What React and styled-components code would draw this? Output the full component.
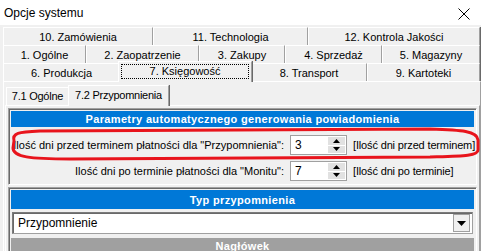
import React from "react";
import styled, { createGlobalStyle } from "styled-components";

const GlobalStyle = createGlobalStyle`
  html, body {
    margin: 0;
    padding: 0;
    background: #f0f0f0;
    overflow: hidden;
  }
  body {
    font-family: "Liberation Sans", Arial, sans-serif;
    font-size: 11px;
    color: #000;
  }
`;

const mainTabs = [
  [
    { label: "10. Zamówienia", w: 150 },
    { label: "11. Technologia", w: 155 },
    { label: "12. Kontrola Jakości", w: 172 },
  ],
  [
    { label: "1. Ogólne", w: 83 },
    { label: "2. Zaopatrzenie", w: 113 },
    { label: "3. Zakupy", w: 86 },
    { label: "4. Sprzedaż", w: 97 },
    { label: "5. Magazyny", w: 98 },
  ],
  [
    { label: "6. Produkcja", w: 117 },
    { label: "7. Księgowość", w: 131, active: true },
    { label: "8. Transport", w: 116 },
    { label: "9. Kartoteki", w: 113 },
  ],
];

const App = () => {
  return (
    <>
      <GlobalStyle />
      <Window>
        <TitleBar>
          <Title>Opcje systemu</Title>
          <CloseButton>
            <svg width="12" height="12" viewBox="0 0 12 12">
              <path d="M0.5 0.5 L11.5 11.5 M11.5 0.5 L0.5 11.5" stroke="#000" strokeWidth="1" />
            </svg>
          </CloseButton>
        </TitleBar>
        <Client>
          <TabRows>
            {mainTabs.map((row, i) => (
              <TabRow key={i}>
                {row.map((t) => (
                  <Tab key={t.label} $w={t.w} $active={t.active}>
                    {t.active ? <Focus>{t.label}</Focus> : t.label}
                  </Tab>
                ))}
              </TabRow>
            ))}
          </TabRows>
          <TabPanel>
            <SubTabRow>
              <SubTab $w={63}>7.1 Ogólne</SubTab>
              <SubTab $w={101} $active>7.2 Przypomnienia</SubTab>
            </SubTabRow>
            <SubPanel>
              <Section>
                <Header>Parametry automatycznego generowania powiadomienia</Header>
                <FieldGrid>
                  <FieldLabel>Ilość dni przed terminem płatności dla "Przypomnienia":</FieldLabel>
                  <Spin value="3" />
                  <Suffix>[Ilość dni przed terminem]</Suffix>
                  <FieldLabel>Ilość dni po terminie płatności dla "Monitu":</FieldLabel>
                  <Spin value="7" />
                  <Suffix>[Ilość dni po terminie]</Suffix>
                </FieldGrid>
              </Section>
              <Section>
                <Header $tall>Typ przypomnienia</Header>
                <ComboWrap>
                  <Combo>
                    <span>Przypomnienie</span>
                    <ComboButton>
                      <svg width="9" height="5" viewBox="0 0 9 5">
                        <path d="M0 0 H9 L4.5 5 Z" fill="#000" />
                      </svg>
                    </ComboButton>
                  </Combo>
                </ComboWrap>
                <Header $gray>Nagłówek</Header>
              </Section>
            </SubPanel>
          </TabPanel>
        </Client>
        <RedMark width="481" height="251" viewBox="0 0 481 251">
          <path
            d="M14 141 C12 133 18 132 40 131 L430 129 C462 130 477 131 478 140 L478 150 C478 156 462 156 430 157 L70 159 C30 159 13 157 13 148 Z"
            fill="none"
            stroke="#e8141c"
            strokeWidth="3"
          />
        </RedMark>
      </Window>
    </>
  );
};

const Spin = ({ value }) => (
  <SpinBox>
    <SpinValue>{value}</SpinValue>
    <SpinButtons>
      <SpinArrow>
        <svg width="7" height="4" viewBox="0 0 7 4">
          <path d="M3.5 0 L7 4 H0 Z" fill="#000" />
        </svg>
      </SpinArrow>
      <SpinArrow>
        <svg width="7" height="4" viewBox="0 0 7 4">
          <path d="M0 0 H7 L3.5 4 Z" fill="#000" />
        </svg>
      </SpinArrow>
    </SpinButtons>
  </SpinBox>
);

const Window = styled.div`
  position: relative;
  width: 481px;
  height: 251px;
  overflow: hidden;
`;

const TitleBar = styled.div`
  height: 25px;
  background: #fff;
  display: flex;
  align-items: center;
  justify-content: space-between;
  padding: 0 11px 0 4px;
`;

const Title = styled.div`
  font-size: 12px;
  margin-top: 1px;
`;

const CloseButton = styled.div`
  display: flex;
  margin-top: 2px;
`;

const Client = styled.div`
  padding: 2px 0 0 3px;
`;

const TabRows = styled.div`
  display: flex;
  flex-direction: column;
`;

const TabRow = styled.div`
  display: flex;
  height: 18px;
`;

const Tab = styled.div`
  position: relative;
  box-sizing: border-box;
  width: ${(p) => p.$w}px;
  flex: none;
  display: flex;
  align-items: center;
  justify-content: center;
  background: #f0f0f0;
  border-top: 1px solid #fff;
  border-left: 1px solid #fff;
  border-right: 1px solid #a0a0a0;
  box-shadow: 1px 0 0 #696969;
  padding-top: 1px;
  z-index: ${(p) => (p.$active ? 2 : 0)};
  ${(p) =>
    p.$active &&
    `
    height: 21px;
    margin-top: -2px;
    margin-left: -2px;
    width: ${p.$w + 3}px;
    padding: 2px 2px 3px;
    margin-right: -1px;
  `}
`;

const Focus = styled.div`
  flex: 1;
  align-self: stretch;
  display: flex;
  justify-content: center;
  align-items: center;
  border: 1px dotted #000;
  padding-bottom: 2px;
`;

const TabPanel = styled.div`
  box-sizing: border-box;
  width: 478px;
  height: 200px;
  border-top: 1px solid #fff;
  border-left: 1px solid #fff;
  border-right: 1px solid #a0a0a0;
  padding: 4px 0 0 1px;
`;

const SubTabRow = styled.div`
  display: flex;
  align-items: flex-end;
  height: 19px;
  padding-left: 1px;
`;

const SubTab = styled.div`
  box-sizing: border-box;
  width: ${(p) => p.$w}px;
  height: ${(p) => (p.$active ? 21 : 18)}px;
  margin-bottom: ${(p) => (p.$active ? -1 : 0)}px;
  padding: 0 0 ${(p) => (p.$active ? 3 : 1)}px;
  display: flex;
  align-items: center;
  justify-content: center;
  background: #f0f0f0;
  border-top: 1px solid #fff;
  border-left: 1px solid #fff;
  border-right: 1px solid #a0a0a0;
  box-shadow: 1px 0 0 #696969;
  font-size: 11px;
  letter-spacing: -0.25px;
  white-space: nowrap;
  position: relative;
  z-index: ${(p) => (p.$active ? 2 : 0)};
  ${(p) => p.$active && `margin-left: -1px;`}
`;

const SubPanel = styled.div`
  box-sizing: border-box;
  border-top: 1px solid #fff;
  border-left: 1px solid #fff;
  border-right: 1px solid #a0a0a0;
  padding: 2px 2px 0 2px;
  height: 160px;
  display: flex;
  flex-direction: column;
  gap: 2px;
`;

const Section = styled.div`
  border: 1px solid #a0a0a0;
  border-right-color: #fff;
  border-bottom-color: #fff;
  box-shadow: inset 1px 1px 0 #696969;
  padding: 2px 2px 0 2px;
`;

const Header = styled.div`
  height: ${(p) => (p.$tall ? 19 : 16)}px;
  background: ${(p) => (p.$gray ? "#a0a0a0" : "#0078d7")};
  color: #fff;
  font-weight: bold;
  font-size: 11px;
  letter-spacing: 0.35px;
  display: flex;
  align-items: center;
  justify-content: center;
`;

const FieldGrid = styled.div`
  display: grid;
  grid-template-columns: 273px 57px auto;
  column-gap: 6px;
  row-gap: 6px;
  align-items: center;
  padding: 8px 0 3px;
`;

const FieldLabel = styled.div`
  text-align: right;
  white-space: nowrap;
  font-size: 11px;
`;

const Suffix = styled.div`
  white-space: nowrap;
  font-size: 11px;
  letter-spacing: -0.15px;
`;

const SpinBox = styled.div`
  box-sizing: border-box;
  height: 20px;
  display: flex;
  background: #fff;
  border: 1px solid #a0a0a0;
  padding: 1px;
`;

const SpinValue = styled.div`
  flex: 1;
  display: flex;
  align-items: center;
  padding-left: 3px;
  font-size: 12px;
`;

const SpinButtons = styled.div`
  width: 17px;
  display: flex;
  flex-direction: column;
  gap: 1px;
`;

const SpinArrow = styled.div`
  flex: 1;
  background: #e1e1e1;
  display: flex;
  align-items: center;
  justify-content: center;
`;

const ComboWrap = styled.div`
  padding: 3px 1px 4px;
`;

const Combo = styled.div`
  box-sizing: border-box;
  height: 22px;
  display: flex;
  align-items: center;
  justify-content: space-between;
  background: #fff;
  border: 1px solid #7a7a7a;
  border-right-color: #a0a0a0;
  border-bottom-color: #a0a0a0;
  box-shadow: inset 1px 1px 0 #696969;
  padding: 0 2px 0 5px;
  font-size: 12px;
`;

const ComboButton = styled.div`
  box-sizing: border-box;
  width: 17px;
  height: 18px;
  background: #f0f0f0;
  border: 1px solid #a0a0a0;
  display: flex;
  align-items: center;
  justify-content: center;
`;

const RedMark = styled.svg`
  position: absolute;
  left: 0;
  top: 0;
  pointer-events: none;
`;

export default App;
